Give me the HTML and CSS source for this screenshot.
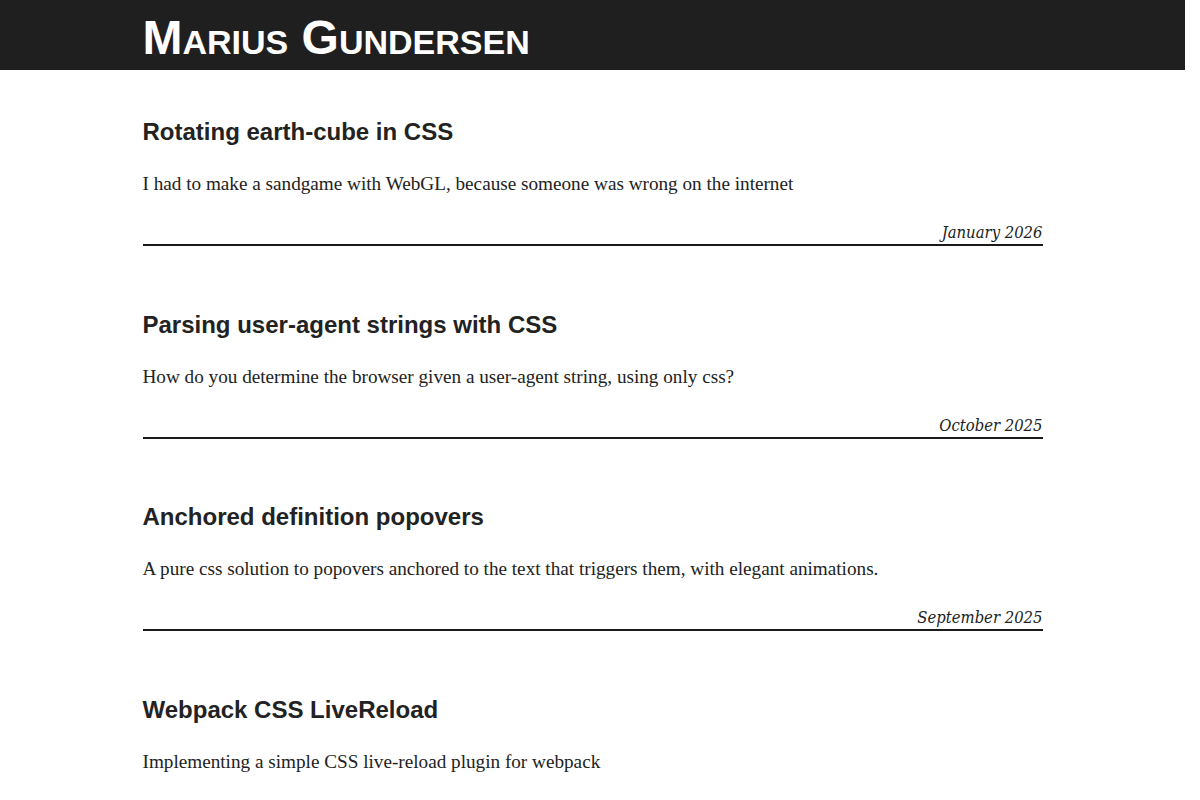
FILE: index.html
```html
<!DOCTYPE html>
<html lang="en">
<head>
<meta charset="utf-8">
<title>Marius Gundersen</title>
<link rel="stylesheet" href="styles.css">
</head>
<body>
<div class="page">
  <header class="site-header">
    <div class="wrap">
      <h1 class="site-title">Marius Gundersen</h1>
    </div>
  </header>
  <main class="wrap posts">
    <article class="post">
      <h2 class="post-title">Rotating earth-cube in CSS</h2>
      <p class="post-summary">I had to make a sandgame with WebGL, because someone was wrong on the internet</p>
      <div class="post-meta"><time>January 2026</time></div>
    </article>
    <article class="post">
      <h2 class="post-title">Parsing user-agent strings with CSS</h2>
      <p class="post-summary">How do you determine the browser given a user-agent string, using only css?</p>
      <div class="post-meta"><time>October 2025</time></div>
    </article>
    <article class="post">
      <h2 class="post-title">Anchored definition popovers</h2>
      <p class="post-summary">A pure css solution to popovers anchored to the text that triggers them, with elegant animations.</p>
      <div class="post-meta"><time>September 2025</time></div>
    </article>
    <article class="post">
      <h2 class="post-title">Webpack CSS LiveReload</h2>
      <p class="post-summary">Implementing a simple CSS live-reload plugin for webpack</p>
      <div class="post-meta"><time>August 2025</time></div>
    </article>
  </main>
</div>
</body>
</html>
```
FILE: styles.css
```css
html, body {
  margin: 0;
  padding: 0;
  background: #ffffff;
}

body {
  color: #222222;
  font-family: "Liberation Serif", "Times New Roman", serif;
}

.page {
  margin-right: 15px;
}

.wrap {
  width: 900px;
  margin: 0 auto;
}

.site-header {
  background: #1f1f1f;
  height: 70px;
}

.site-title {
  margin: 0;
  color: #ffffff;
  font-family: "Liberation Sans", Arial, sans-serif;
  font-weight: bold;
  font-size: 48px;
  font-variant: small-caps;
  line-height: 76px;
}

.posts {
  display: flex;
  flex-direction: column;
  gap: 63.7px;
  padding-top: 47px;
  padding-bottom: 40px;
}

.post-title {
  margin: 0;
  font-family: "Liberation Sans", Arial, sans-serif;
  font-weight: bold;
  font-size: 24px;
  line-height: 30px;
  color: #222222;
}

.post-summary {
  margin: 22px 0 0;
  font-size: 19.2px;
  line-height: 30px;
}

.post-meta {
  margin-top: 24px;
  text-align: right;
  border-bottom: 2px solid #1a1a1a;
  padding-bottom: 1px;
  font-family: "DejaVu Serif Condensed", "DejaVu Serif", serif;
  font-stretch: semi-condensed;
  font-style: italic;
  font-size: 16.5px;
  line-height: 20px;
}
```
